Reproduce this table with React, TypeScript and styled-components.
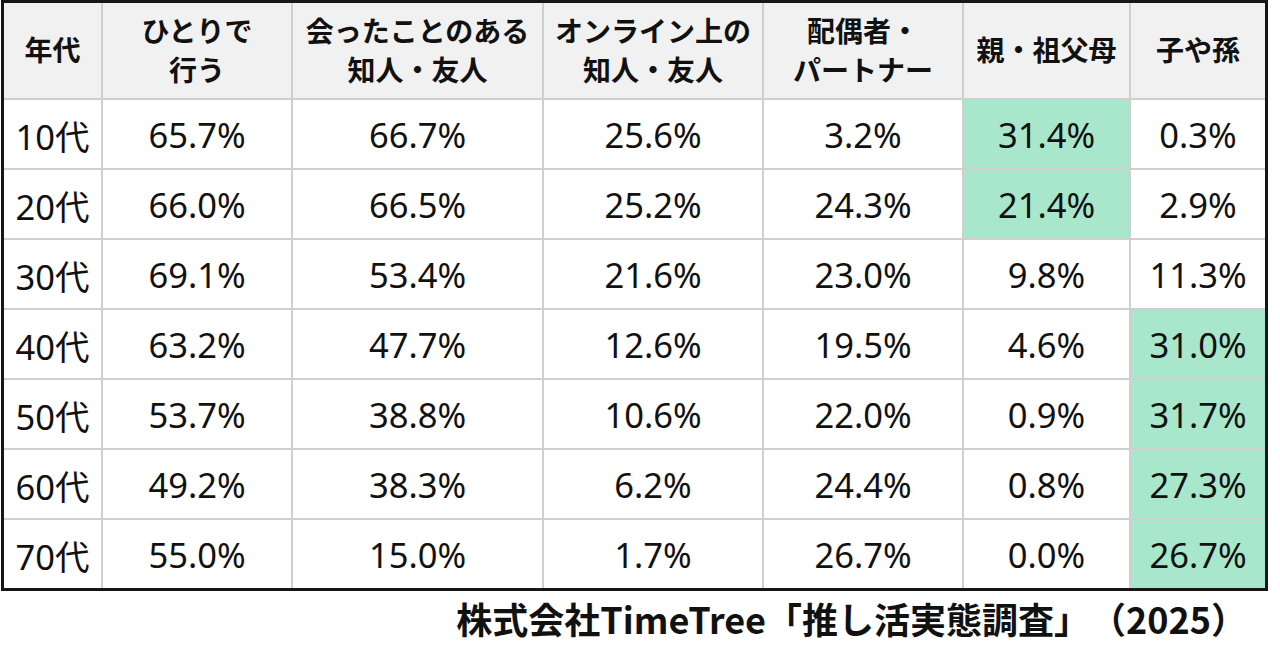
import React from "react";
import styled, { createGlobalStyle } from "styled-components";

const Global = createGlobalStyle`
  html, body { margin: 0; padding: 0; background: #ffffff; }
  body { font-family: "Noto Sans", "Noto Sans CJK JP", sans-serif; color: #111; }
`;

const Page = styled.div`
  width: 1280px;
  display: flex;
  flex-direction: column;
  padding-left: 1px;
  box-sizing: border-box;
`;

const Grid = styled.div`
  width: 1267px;
  box-sizing: border-box;
  border: 3px solid #161616;
  background: #cfcfcf;
  display: grid;
  grid-template-columns: 97px 188px 249px 218px 198px 165px 134px;
  grid-template-rows: 95px repeat(7, 68px);
  gap: 2px;
`;

const HeadCell = styled.div`
  background: #f1f1f1;
  display: flex;
  align-items: center;
  justify-content: center;
  text-align: center;
  font-family: "Noto Sans CJK JP", sans-serif;
  font-weight: 700;
  font-size: 28px;
  line-height: 39px;
  white-space: pre-line;
  text-spacing-trim: space-all;
  padding-bottom: 2px;
`;

const Cell = styled.div<{ $hl?: boolean }>`
  background: ${(p) => (p.$hl ? "#a9e7cd" : "#ffffff")};
  display: flex;
  align-items: center;
  justify-content: center;
  font-family: "Noto Sans", "Noto Sans CJK JP", sans-serif;
  font-size: 34.5px;
  font-weight: 400;
  color: #111;
  padding-top: 1px;
`;

const AgeText = styled.span`
  display: inline-flex;
  align-items: baseline;
`;

const AgeKanji = styled.span`
  font-family: "Noto Sans CJK JP", sans-serif;
  font-weight: 400;
`;

const Footer = styled.div`
  display: flex;
  justify-content: flex-end;
  padding-right: 33px;
  margin-top: 2px;
  font-family: "Noto Sans CJK JP", sans-serif;
  font-weight: 700;
  font-size: 36px;
  line-height: 50px;
  text-spacing-trim: space-all;
  color: #111;
`;

const headers = [
  "年代",
  "ひとりで\n行う",
  "会ったことのある\n知人・友人",
  "オンライン上の\n知人・友人",
  "配偶者・\nパートナー",
  "親・祖父母",
  "子や孫",
];

const rows: { age: string; vals: string[]; hl: number[] }[] = [
  { age: "10", vals: ["65.7%", "66.7%", "25.6%", "3.2%", "31.4%", "0.3%"], hl: [4] },
  { age: "20", vals: ["66.0%", "66.5%", "25.2%", "24.3%", "21.4%", "2.9%"], hl: [4] },
  { age: "30", vals: ["69.1%", "53.4%", "21.6%", "23.0%", "9.8%", "11.3%"], hl: [] },
  { age: "40", vals: ["63.2%", "47.7%", "12.6%", "19.5%", "4.6%", "31.0%"], hl: [5] },
  { age: "50", vals: ["53.7%", "38.8%", "10.6%", "22.0%", "0.9%", "31.7%"], hl: [5] },
  { age: "60", vals: ["49.2%", "38.3%", "6.2%", "24.4%", "0.8%", "27.3%"], hl: [5] },
  { age: "70", vals: ["55.0%", "15.0%", "1.7%", "26.7%", "0.0%", "26.7%"], hl: [5] },
];

export default function App() {
  return (
    <>
      <Global />
      <Page>
        <Grid>
          {headers.map((h) => (
            <HeadCell key={h}>{h}</HeadCell>
          ))}
          {rows.map((r) => (
            <React.Fragment key={r.age}>
              <Cell>
                <AgeText>
                  {r.age}
                  <AgeKanji>代</AgeKanji>
                </AgeText>
              </Cell>
              {r.vals.map((v, i) => (
                <Cell key={i} $hl={r.hl.includes(i)}>
                  {v}
                </Cell>
              ))}
            </React.Fragment>
          ))}
        </Grid>
        <Footer>株式会社TimeTree「推し活実態調査」（2025）</Footer>
      </Page>
    </>
  );
}
